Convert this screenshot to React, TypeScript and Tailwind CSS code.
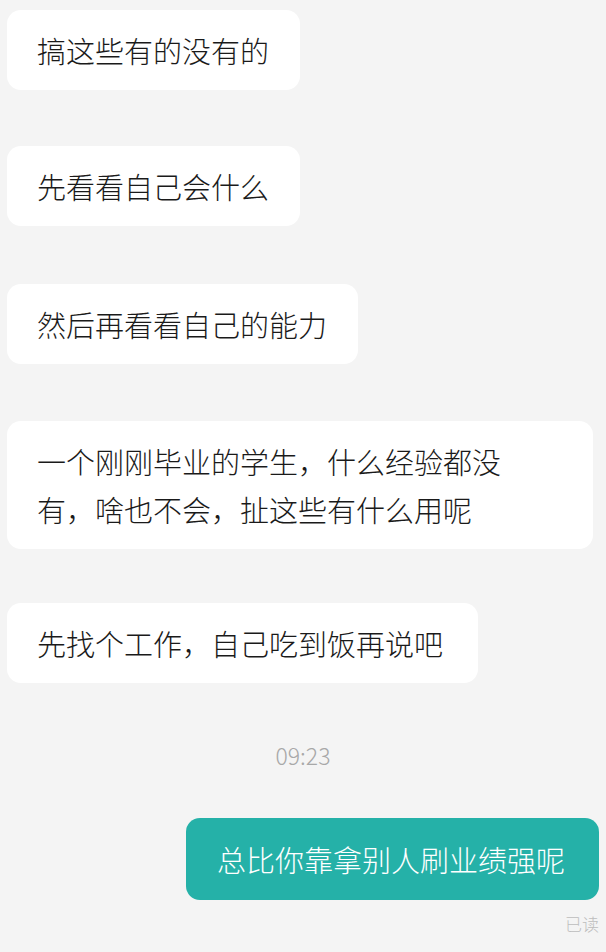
const font = { fontFamily: '"Noto Sans CJK SC", "Noto Sans", sans-serif' };

function Incoming({ text, className = "" }: { text: string; className?: string }) {
  return (
    <div
      className={`self-start rounded-[14px] bg-white pl-[30px] py-[16px] text-[29px] font-light leading-[48px] text-[#1a1a1a] ${className}`}
    >
      {text}
    </div>
  );
}

export default function App() {
  return (
    <div className="h-[952px] w-[606px] overflow-hidden bg-[#f4f4f4]" style={font}>
      <div className="flex flex-col pt-[10px] px-[7px]">
        <Incoming text="搞这些有的没有的" className="w-[293px]" />
        <Incoming text="先看看自己会什么" className="mt-[56px] w-[293px]" />
        <Incoming text="然后再看看自己的能力" className="mt-[58px] w-[351px]" />
        <Incoming
          text="一个刚刚毕业的学生，什么经验都没有，啥也不会，扯这些有什么用呢"
          className="mt-[57px] w-[586px] pr-[70px]"
        />
        <Incoming text="先找个工作，自己吃到饭再说吧" className="mt-[54px] w-[471px]" />

        <div className="mt-[59px] text-center text-[23px] font-light leading-[26px] text-[#a8a8a8]">
          09:23
        </div>

        <div className="mt-[50px] self-end w-[413px] rounded-[14px] bg-[#25b1a8] pl-[31px] py-[17px] text-[29px] font-light leading-[48px] text-white">
          总比你靠拿别人刷业绩强呢
        </div>
        <div className="mt-[14px] self-end text-[17px] font-light leading-[20px] text-[#bdbdbd]">已读</div>
      </div>
    </div>
  );
}
